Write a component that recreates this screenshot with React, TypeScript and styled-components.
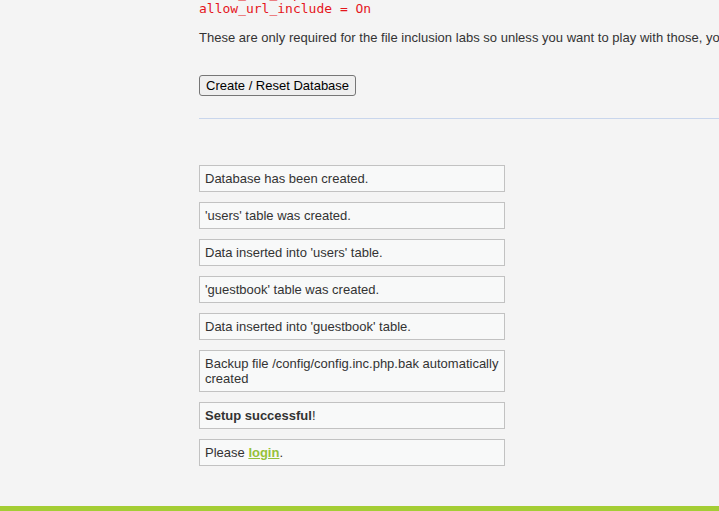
import React from "react";
import styled, { createGlobalStyle } from "styled-components";

const Global = createGlobalStyle`
  html, body {
    margin: 0;
    padding: 0;
    background: #f4f4f4;
    overflow: hidden;
  }
  body {
    font-family: "Liberation Sans", Arial, sans-serif;
    font-size: 13px;
    color: #333;
  }
`;

const Page = styled.div`
  display: flex;
  flex-direction: column;
  width: 719px;
  height: 511px;
  overflow: hidden;
`;

const Layout = styled.div`
  display: flex;
  flex-direction: row;
`;

const Sidebar = styled.div`
  flex: 0 0 199px;
`;

const Main = styled.div`
  flex: 0 0 760px;
  display: flex;
  flex-direction: column;
  align-items: flex-start;
`;

const Code = styled.div`
  margin-top: -14px;
  font-family: "DejaVu Sans Mono", monospace;
  font-size: 13px;
  line-height: 15px;
  color: #e5161c;
  white-space: pre;
`;

const Para = styled.p`
  margin: 14px 0 0;
  line-height: 15px;
  white-space: nowrap;
  letter-spacing: 0.02px;
`;

const Button = styled.button`
  margin-top: 30px;
  height: 21px;
  padding: 1px 6px;
  font-family: "Liberation Sans", Arial, sans-serif;
  font-size: 13px;
  color: #000;
  background: #efefef;
  border: 1px solid #767676;
  border-radius: 3px;
`;

const Rule = styled.hr`
  align-self: stretch;
  margin: 22px 0 0;
  border: 0;
  height: 1px;
  background: #c9d6ec;
`;

const Messages = styled.div`
  margin-top: 46px;
  display: flex;
  flex-direction: column;
  gap: 10px;
`;

const Message = styled.div`
  box-sizing: border-box;
  width: 306px;
  padding: 5px;
  line-height: 15px;
  background: #f8f9f9;
  border: 1px solid #c2c2c2;
`;

const Link = styled.a`
  color: #95c13a;
  font-weight: bold;
  text-decoration: underline;
`;

const Footer = styled.div`
  margin-top: 40px;
  height: 20px;
  background: #a4cd34;
  flex: 0 0 auto;
`;

export default function App() {
  const msgs = [
    "Database has been created.",
    "'users' table was created.",
    "Data inserted into 'users' table.",
    "'guestbook' table was created.",
    "Data inserted into 'guestbook' table.",
    "Backup file /config/config.inc.php.bak automatically created",
  ];
  return (
    <>
      <Global />
      <Page>
        <Layout>
          <Sidebar />
          <Main>
            <Code>
              {"allow_url_fopen = On\nallow_url_include = On"}
            </Code>
            <Para>
              These are only required for the file inclusion labs so unless you want to play with those, you can ignore them.
            </Para>
            <Button>Create / Reset Database</Button>
            <Rule />
            <Messages>
              {msgs.map((m) => (
                <Message key={m}>{m}</Message>
              ))}
              <Message>
                <b>Setup successful</b>!
              </Message>
              <Message>
                Please <Link href="#">login</Link>.
              </Message>
            </Messages>
          </Main>
        </Layout>
        <Footer />
      </Page>
    </>
  );
}
